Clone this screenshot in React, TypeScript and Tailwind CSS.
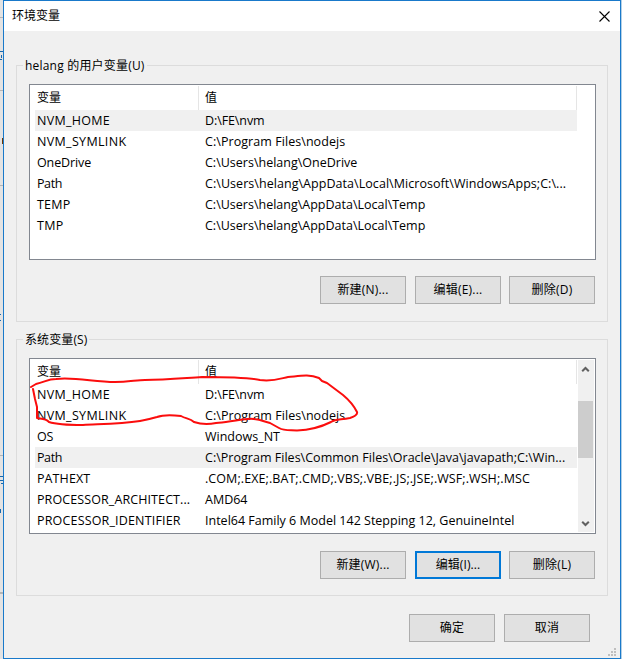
import { useState } from "react";

type Variable = { name: string; value: string; nameClass?: string; valueClass?: string };

const userVariables: Variable[] = [
  { name: "NVM_HOME", value: "D:\\FE\\nvm", nameClass: "tracking-[0.3px]", valueClass: "tracking-[-0.1px]" },
  { name: "NVM_SYMLINK", value: "C:\\Program Files\\nodejs", nameClass: "tracking-[0.33px]", valueClass: "tracking-[0.06px]" },
  { name: "OneDrive", value: "C:\\Users\\helang\\OneDrive", nameClass: "tracking-[-0.12px]" },
  {
    name: "Path",
    value: "C:\\Users\\helang\\AppData\\Local\\Microsoft\\WindowsApps;C:\\...",
    nameClass: "tracking-[-0.4px]",
    valueClass: "tracking-[0.05px]",
  },
  { name: "TEMP", value: "C:\\Users\\helang\\AppData\\Local\\Temp", nameClass: "tracking-[0.2px]" },
  { name: "TMP", value: "C:\\Users\\helang\\AppData\\Local\\Temp", nameClass: "tracking-[0.3px]" },
];

const systemVariables: Variable[] = [
  { name: "NVM_HOME", value: "D:\\FE\\nvm", nameClass: "tracking-[0.3px]", valueClass: "tracking-[-0.1px]" },
  { name: "NVM_SYMLINK", value: "C:\\Program Files\\nodejs", nameClass: "tracking-[0.33px]", valueClass: "tracking-[0.06px]" },
  { name: "OS", value: "Windows_NT", nameClass: "tracking-[-0.3px]" },
  {
    name: "Path",
    value: "C:\\Program Files\\Common Files\\Oracle\\Java\\javapath;C:\\Win...",
    nameClass: "tracking-[-0.4px]",
    valueClass: "tracking-[0.02px]",
  },
  { name: "PATHEXT", value: ".COM;.EXE;.BAT;.CMD;.VBS;.VBE;.JS;.JSE;.WSF;.WSH;.MSC", nameClass: "tracking-[0.1px]", valueClass: "tracking-[0.08px]" },
  { name: "PROCESSOR_ARCHITECT...", value: "AMD64", nameClass: "tracking-[0.1px]" },
  { name: "PROCESSOR_IDENTIFIER", value: "Intel64 Family 6 Model 142 Stepping 12, GenuineIntel", nameClass: "tracking-[0.17px]" },
];

function Button({ children, focused = false }: { children: string; focused?: boolean }) {
  return (
    <button
      className={
        focused
          ? "flex h-7 w-[86px] items-center justify-center border-2 border-[#0078d7] bg-[#e1e1e1] tracking-[0.1px]"
          : "flex h-7 w-[86px] items-center justify-center border border-[#adadad] bg-[#e1e1e1] tracking-[0.2px]"
      }
    >
      {children}
    </button>
  );
}

function VariableTable({
  rows,
  selected,
  onSelect,
  scroll = false,
}: {
  rows: Variable[];
  selected: number;
  onSelect: (i: number) => void;
  scroll?: boolean;
}) {
  return (
    <div className="flex h-[176px] w-[567px] border border-[#828790] bg-white">
      <div className="w-[547px]">
        <div className="flex h-[25px] pt-px">
          <div className="w-[169px] border-r border-[#e5e5e5] pl-[7px] leading-[23px]">变量</div>
          <div className="w-[378px] border-r border-[#e5e5e5] pl-[6px] leading-[23px]">值</div>
        </div>
        {rows.map((row, i) => (
          <div
            key={row.name}
            onClick={() => onSelect(i)}
            className={
              i === selected
                ? "ml-[5px] flex h-[21px] bg-[#f0f0f0] text-[12.5px] leading-[22px] whitespace-pre"
                : "ml-[5px] flex h-[21px] text-[12.5px] leading-[22px] whitespace-pre"
            }
          >
            <div className="w-[168px] pl-[2px]">
              <span className={row.nameClass}>{row.name}</span>
            </div>
            <div className="flex-1 pl-[2px]">
              <span className={row.valueClass}>{row.value}</span>
            </div>
          </div>
        ))}
      </div>
      {scroll && (
        <div className="my-px ml-px flex w-4 flex-col bg-[#f0f0f0]">
          <svg width="16" height="17" viewBox="0 0 16 17" fill="none" stroke="#606060" strokeWidth="2">
            <path d="M4.2 11.3 7.5 8 10.8 11.3" />
          </svg>
          <div className="mt-6 h-[57px] w-[15px] bg-[#cdcdcd]" />
          <svg className="mt-auto" width="16" height="17" viewBox="0 0 16 17" fill="none" stroke="#606060" strokeWidth="2">
            <path d="M4.2 6.7 7.5 10 10.8 6.7" />
          </svg>
        </div>
      )}
    </div>
  );
}

function GripDots() {
  return (
    <svg width="9" height="9" viewBox="0 0 9 9" fill="#bfbfbf" shapeRendering="crispEdges">
      <path d="M6 0h2v2H6zM3 3h2v2H3zM6 3h2v2H6zM0 6h2v2H0zM3 6h2v2H3zM6 6h2v2H6z" />
    </svg>
  );
}

export default function App() {
  const [userRow, setUserRow] = useState(0);
  const [systemRow, setSystemRow] = useState(3);

  return (
    <div className="relative flex h-[659px] w-[622px] overflow-hidden bg-[#e3e3e3] font-['Open_Sans','Noto_Sans_CJK_SC',sans-serif] text-[12px] text-black">
      <svg width="3" height="659" viewBox="0 0 3 659" shapeRendering="crispEdges">
        <path fill="#b5b5b5" d="M0 17h3v1H0zM0 90h3v1H0zM0 185h3v1H0zM0 455h3v1H0zM0 592h3v2H0z" />
        <path fill="#1768ad" d="M0 51h3v1H0zM1 55h1v3H1zM0 59h2v1H0zM0 314h1v1H0zM0 320h1v1H0zM0 476h3v1H0zM0 480h3v1H0zM1 483h2v1H1zM0 509h1v4H0z" />
        <path fill="#713800" d="M2 138h1v6H2z" />
      </svg>
      <div className="flex h-[659px] w-[618px] flex-col border border-[#1979ca] bg-[#f0f0f0]">
        <header className="flex h-[30px] items-center justify-between bg-white pr-[10px] pl-2">
          <span>环境变量</span>
          <svg width="11" height="11" viewBox="0 0 11 11" stroke="#000" strokeWidth="1.1">
            <path d="M.5 .5 10.5 10.5M10.5 .5 .5 10.5" />
          </svg>
        </header>

        <fieldset className="mt-[25px] ml-3 h-[266px] w-[592px]">
          <div className="flex h-[18px] items-center">
            <span className="h-px w-[7px] bg-[#dcdcdc]" />
            <span className="px-[2px] pt-[2px] tracking-[0.2px]">helang 的用户变量(U)</span>
            <span className="h-px flex-1 bg-[#dcdcdc]" />
          </div>
          <div className="-mt-[9px] h-[257px] border-x border-b border-[#dcdcdc] pt-[19px] pl-3">
            <VariableTable rows={userVariables} selected={userRow} onSelect={setUserRow} />
            <div className="mt-4 ml-[291px] flex">
              <Button>新建(N)...</Button>
              <div className="ml-[9px]"><Button>编辑(E)...</Button></div>
              <div className="ml-2"><Button>删除(D)</Button></div>
            </div>
          </div>
        </fieldset>

        <fieldset className="mt-2 ml-3 h-[266px] w-[592px]">
          <div className="flex h-[18px] items-center">
            <span className="h-px w-[7px] bg-[#dcdcdc]" />
            <span className="px-[2px] pt-[2px] tracking-[0.1px]">系统变量(S)</span>
            <span className="h-px flex-1 bg-[#dcdcdc]" />
          </div>
          <div className="-mt-[9px] h-[257px] border-x border-b border-[#dcdcdc] pt-[19px] pl-3">
            <VariableTable rows={systemVariables} selected={systemRow} onSelect={setSystemRow} scroll />
            <div className="mt-[17px] ml-[291px] flex">
              <Button>新建(W)...</Button>
              <div className="ml-[9px]"><Button focused>编辑(I)...</Button></div>
              <div className="ml-2"><Button>删除(L)</Button></div>
            </div>
          </div>
        </fieldset>

        <footer className="mt-[18px] flex flex-1">
          <div className="ml-[405px] flex gap-[9px]">
            <Button>确定</Button>
            <Button>取消</Button>
          </div>
          <div className="mt-auto ml-[18px] pb-px">
            <GripDots />
          </div>
        </footer>
      </div>
      <div className="w-px bg-[#b5d0e4]" />

      {/* hand-drawn highlight over the NVM entries */}
      <svg
        className="pointer-events-none absolute top-0 left-0"
        width="622"
        height="659"
        fill="none"
        stroke="#fb0d0d"
        strokeWidth="2"
        strokeLinecap="round"
        strokeLinejoin="round"
      >
        <path d="M31 387L36 384C45 382 48 379 56 379C76 377 94 382 115 382C128 382 137 380 145 380C165 380 185 378 202 377C224 377 245 377 260 380C273 382 282 378 288 377C300 376 309 374 319 378L322 381L327 383L343 395C349 400 354 406 357 412C358 415 353 417 350 418C340 420 336 419 331 422C321 427 311 430 297 430.500C290 430 284 431 279 428L270 423C262 421 258 418 248 419C237 420 226 422 216 423C206 425 200 424 194 422C190 418 186 419 181 416C173 415 165 414 157 417C150 419 146 420 140 421C120 424 101 424 83 425C66 425 55 424 49 422C45 418 40 419 37 418L37 407L35 399L33 389" />
      </svg>
    </div>
  );
}
